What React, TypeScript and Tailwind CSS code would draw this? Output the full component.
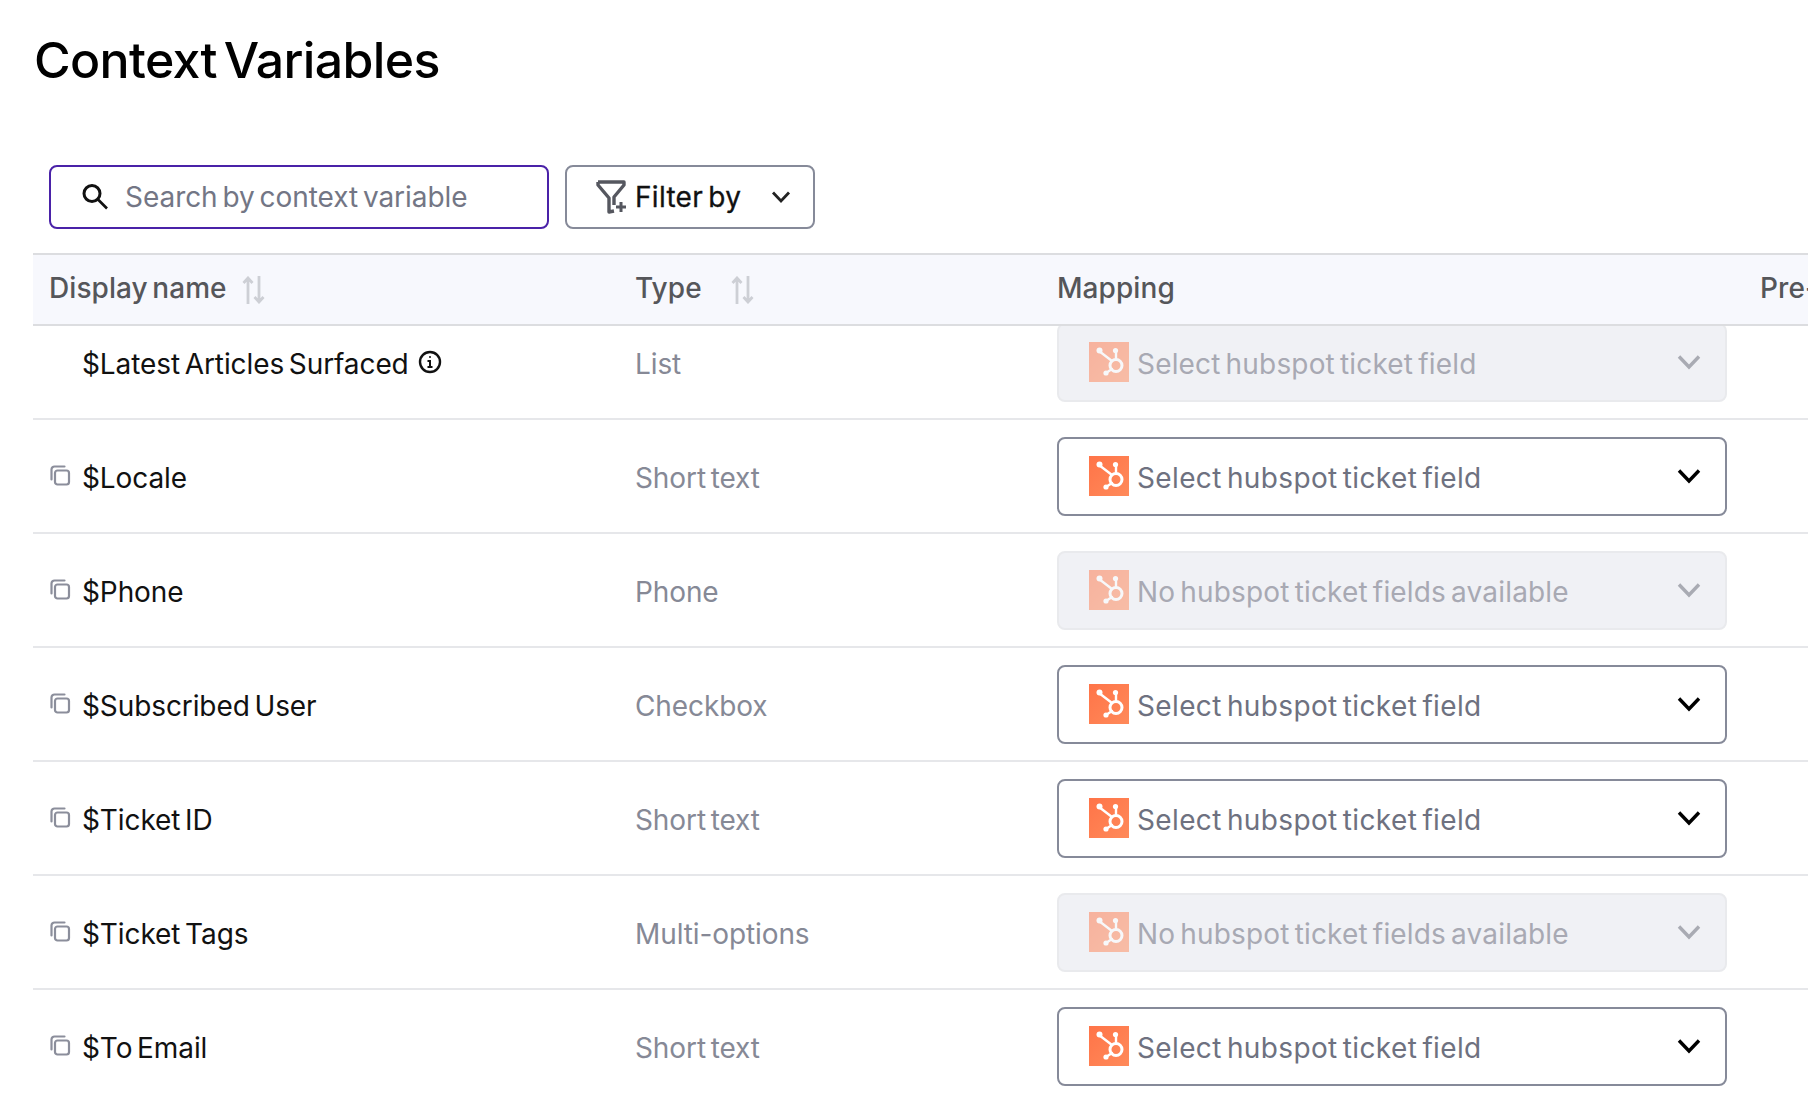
import React from "react";

function Hub({ off }: { off?: boolean }) {
  return (
    <svg width="40" height="40" viewBox="0 0 40 40" className={off ? "shrink-0 opacity-50" : "shrink-0"}>
      <defs>
        <linearGradient id="hg" x1="0" y1="0" x2="1" y2="1">
          <stop offset="0" stopColor="#ff7448" />
          <stop offset="1" stopColor="#ff8a5a" />
        </linearGradient>
      </defs>
      <rect width="40" height="40" fill="url(#hg)" />
      <g stroke="#fff" fill="none" strokeWidth="2.4" strokeLinecap="round">
        <circle cx="27" cy="23.5" r="6" strokeWidth="3" />
        <path d="M27 9v8" />
        <path d="M10 9l13 10" />
        <path d="M17 31l6-4" />
      </g>
      <circle cx="26.5" cy="8.5" r="2.6" fill="#fff" />
      <circle cx="10.5" cy="8.5" r="3" fill="#fff" />
      <circle cx="17" cy="31" r="2.6" fill="#fff" />
    </svg>
  );
}

function Chev({ off }: { off?: boolean }) {
  return (
    <svg width="24" height="16" viewBox="0 0 24 16" fill="none" stroke={off ? "#a9abb3" : "#000"} strokeWidth="3.4" className="shrink-0">
      <path d="M2 2.5L12 13L22 2.5" />
    </svg>
  );
}

function Copy() {
  return (
    <svg width="22" height="22" viewBox="0 0 22 22" fill="none" stroke="#8b8e9b" strokeWidth="2.2" className="shrink-0">
      <rect x="6" y="5.5" width="14" height="14" rx="2.5" />
      <path d="M2.5 14.5V4.5a3 3 0 0 1 3-3h10" strokeLinecap="round" />
    </svg>
  );
}

function Sort() {
  return (
    <svg width="26" height="28" viewBox="0 0 26 28" fill="none" stroke="#cdcfd5" strokeWidth="2.8" className="shrink-0">
      <path d="M7 28V2M2.5 7l4.5-5 4.5 5" />
      <path d="M18 0v26M13.5 21l4.5 5 4.5-5" />
    </svg>
  );
}

function Select({ text, off }: { text: string; off?: boolean }) {
  return (
    <div
      className={
        off
          ? "flex h-[79px] w-[670px] items-center rounded-[8px] border-2 border-[#e9eaed] bg-[#f0f1f5] pl-[30px] pr-[24px]"
          : "flex h-[79px] w-[670px] items-center rounded-[8px] border-2 border-[#868a99] bg-white pl-[30px] pr-[24px]"
      }
    >
      <Hub off={off} />
      <span className={off ? "ml-[8px] flex-1 pt-[4px] tracking-[0.17px] text-[#a8a9b3]" : "ml-[8px] flex-1 pt-[4px] tracking-[0.36px] text-[#6e7180]"}>{text}</span>
      <Chev off={off} />
    </div>
  );
}

const rows = [
  { name: "$Latest Articles Surfaced", type: "List", text: "Select hubspot ticket field", off: true, info: true },
  { name: "$Locale", type: "Short text", text: "Select hubspot ticket field" },
  { name: "$Phone", type: "Phone", text: "No hubspot ticket fields available", off: true },
  { name: "$Subscribed User", type: "Checkbox", text: "Select hubspot ticket field" },
  { name: "$Ticket ID", type: "Short text", text: "Select hubspot ticket field" },
  { name: "$Ticket Tags", type: "Multi-options", text: "No hubspot ticket fields available", off: true },
  { name: "$To Email", type: "Short text", text: "Select hubspot ticket field" },
];

export default function App() {
  return (
    <div className="flex h-[1097px] w-[1808px] flex-col overflow-hidden bg-white text-[28px] tracking-[-0.1px] text-[#111] [font-family:Inter,sans-serif] [word-spacing:-3px]">
      <h1 className="ml-[34px] mt-[24px] text-[50px] font-medium leading-[72px] tracking-[-0.65px] text-black [word-spacing:-6px]">Context Variables</h1>

      <div className="ml-[49px] mt-[69px] flex gap-[16px]">
        <div className="flex h-[64px] w-[500px] items-center rounded-[8px] border-2 border-[#4a22a8] pl-[30px]">
          <svg width="28" height="28" viewBox="0 0 28 28" fill="none" stroke="#111" strokeWidth="3" className="shrink-0">
            <circle cx="11" cy="10.5" r="8" />
            <path d="M17 16.5l9 9" strokeWidth="2.6" />
          </svg>
          <span className="ml-[16px] tracking-[-0.05px] text-[#737685]">Search by context variable</span>
        </div>
        <div className="flex h-[64px] w-[250px] items-center rounded-[8px] border-2 border-[#868a99] pl-[28px]">
          <svg width="34" height="36" viewBox="0 0 34 36" fill="none" stroke="#55575f" strokeWidth="3.4" className="shrink-0">
            <path d="M3 3h26v3L19 18v8M3 3v3l11 13v14l5-1" strokeLinejoin="round" />
            <path d="M26 23v10M21 28h10" strokeWidth="3" />
          </svg>
          <span className="ml-[6px] flex-1 tracking-[0.3px] text-[#111] [-webkit-text-stroke:0.3px_#111]">Filter by</span>
          <svg width="20" height="14" viewBox="0 0 20 14" fill="none" stroke="#222" strokeWidth="2.8" className="mr-[22px] shrink-0">
            <path d="M2 2.5L10 11L18 2.5" />
          </svg>
        </div>
      </div>

      <div className="ml-[33px] mt-[24px] grid h-[73px] shrink-0 grid-cols-[586px_422px_703px_1fr] items-center overflow-hidden border-y-2 border-[#dcdde0] bg-[#f7f8fd] font-medium tracking-[0.07px] text-[#55565a]">
        <div className="flex items-center gap-[14px] pl-[16px]">
          <span className="pb-[3px]">Display name</span>
          <Sort />
        </div>
        <div className="flex items-center gap-[28px] pl-[16px]">
          <span className="pb-[3px]">Type</span>
          <Sort />
        </div>
        <div className="pb-[3px] pl-[16px]">Mapping</div>
        <div className="whitespace-nowrap pb-[3px] pl-[16px]">Pre-fill</div>
      </div>

      <div className="ml-[33px] flex-1 overflow-hidden">
        <div className="-mt-[20px]">
          {rows.map((r) => (
            <div key={r.name} className="grid h-[114px] grid-cols-[586px_422px_703px_1fr] items-center border-b-2 border-[#e6e7ea]">
              <div className="flex items-center pl-[16px]">
                <span className="flex w-[33px] shrink-0">{!r.info && <Copy />}</span>
                <span className="pt-[4px]">{r.name}</span>
                {r.info && (
                  <svg width="24" height="24" viewBox="0 0 24 24" fill="none" stroke="#111" strokeWidth="2.4" className="ml-[9px] shrink-0">
                    <circle cx="12" cy="12" r="10" />
                    <path d="M9.5 11h2.5v6M9.5 17h5" strokeWidth="2" />
                    <circle cx="12" cy="7" r="1" fill="#111" stroke="none" />
                  </svg>
                )}
              </div>
              <div className="pl-[16px] pt-[4px] text-[#868996]">{r.type}</div>
              <div className="pl-[16px]">
                <Select text={r.text} off={r.off} />
              </div>
              <div />
            </div>
          ))}
        </div>
      </div>
    </div>
  );
}
